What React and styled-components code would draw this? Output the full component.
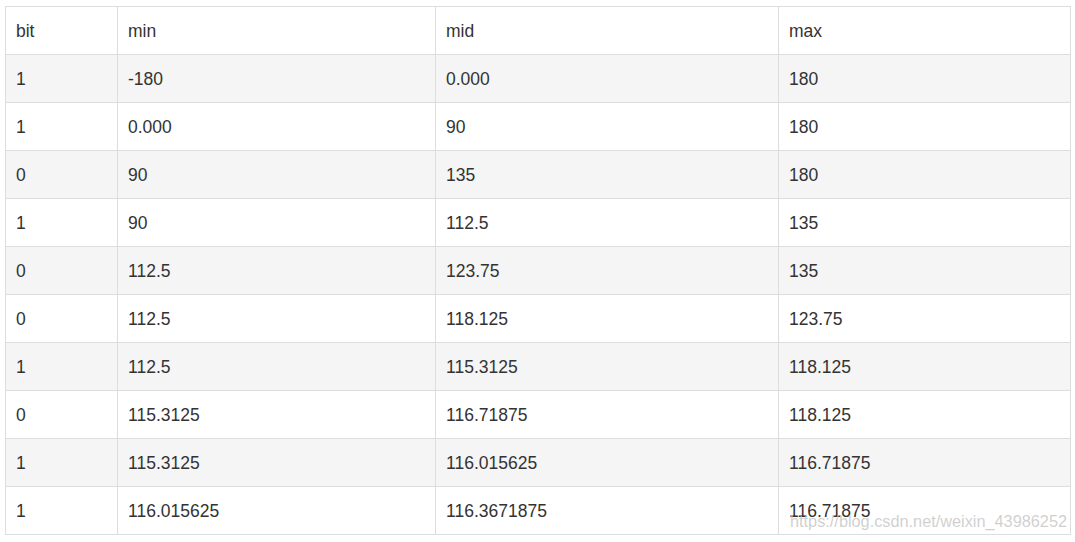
import React from "react";
import styled, { createGlobalStyle } from "styled-components";

const GlobalStyle = createGlobalStyle`
  body {
    margin: 0;
    background: #fff;
    font-family: "Liberation Sans", Arial, sans-serif;
  }
`;

const Page = styled.div`
  position: relative;
  padding: 6px 5px 0 5px;
  width: 1065px;
`;

const Table = styled.table`
  width: 1065px;
  border-collapse: collapse;
  table-layout: fixed;
  font-size: 17.5px;
  color: #333;
`;

const Row = styled.tr`
  height: 48px;
  background: ${(p) => (p.$striped ? "#f5f5f5" : "#fff")};
`;

const Cell = styled.td`
  height: 47px;
  box-sizing: border-box;
  padding: 0 10px;
  border: 1px solid #ddd;
  text-align: left;
  vertical-align: middle;
  font-weight: normal;
  line-height: 18px;
  overflow: hidden;
`;

const Watermark = styled.div`
  position: absolute;
  right: 8px;
  top: 512px;
  font-size: 16.3px;
  line-height: 18px;
  color: rgba(200, 200, 200, 0.85);
  font-family: "Liberation Sans", Arial, sans-serif;
  pointer-events: none;
`;

const rows = [
  ["1", "-180", "0.000", "180"],
  ["1", "0.000", "90", "180"],
  ["0", "90", "135", "180"],
  ["1", "90", "112.5", "135"],
  ["0", "112.5", "123.75", "135"],
  ["0", "112.5", "118.125", "123.75"],
  ["1", "112.5", "115.3125", "118.125"],
  ["0", "115.3125", "116.71875", "118.125"],
  ["1", "115.3125", "116.015625", "116.71875"],
  ["1", "116.015625", "116.3671875", "116.71875"],
];

export default function App() {
  return (
    <>
      <GlobalStyle />
      <Page>
        <Table>
          <colgroup>
            <col style={{ width: 112 }} />
            <col style={{ width: 318 }} />
            <col style={{ width: 343 }} />
            <col style={{ width: 292 }} />
          </colgroup>
          <thead>
            <Row>
              <Cell as="th">bit</Cell>
              <Cell as="th">min</Cell>
              <Cell as="th">mid</Cell>
              <Cell as="th">max</Cell>
            </Row>
          </thead>
          <tbody>
            {rows.map((r, i) => (
              <Row key={i} $striped={i % 2 === 0}>
                {r.map((v, j) => (
                  <Cell key={j}>{v}</Cell>
                ))}
              </Row>
            ))}
          </tbody>
        </Table>
        <Watermark>https://blog.csdn.net/weixin_43986252</Watermark>
      </Page>
    </>
  );
}
